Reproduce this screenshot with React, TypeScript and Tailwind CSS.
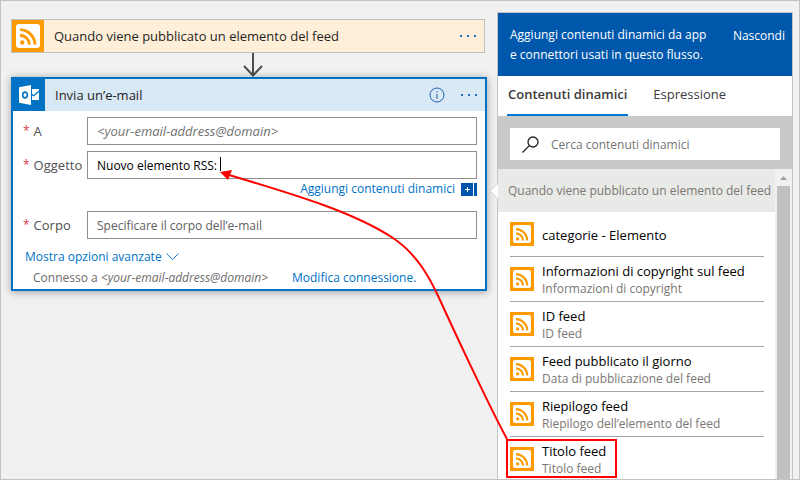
import { useState } from 'react';

const feedItems = [
  { title: 'categorie - Elemento' },
  { title: 'Informazioni di copyright sul feed', detail: 'Informazioni di copyright' },
  { title: 'ID feed', detail: 'ID feed' },
  { title: 'Feed pubblicato il giorno', detail: 'Data di pubblicazione del feed' },
  { title: 'Riepilogo feed', detail: 'Riepilogo dell’elemento del feed' },
  { title: 'Titolo feed', detail: 'Titolo feed' },
];

function RssIcon({ className }: { className: string }) {
  return (
    <svg viewBox="0 0 32 32" className={className} aria-hidden="true">
      <rect width="32" height="32" fill="#ff9b00" />
      <rect x="4" y="4" width="24" height="24" rx="3" fill="#fff" />
      <circle cx="10.200" cy="22.500" r="2.200" fill="#ff9b00" />
      <path d="M8 15.200a9.600 9.600 0 0 1 9.400 9.400M8 9.600a15.500 15.500 0 0 1 15 15" fill="none" stroke="#ff9b00" strokeWidth="2.900" />
    </svg>
  );
}

function OutlookIcon() {
  return (
    <svg viewBox="0 0 32 32" className="size-8 shrink-0 bg-[#0072c6]" aria-hidden="true">
      <path d="M6 8.200 18 6v20L6 23.800z" fill="#fff" />
      <ellipse cx="12" cy="16" rx="2.300" ry="2.900" fill="none" stroke="#0072c6" strokeWidth="1.600" />
      <path d="M19 10h7v1.500l-5.500 4.500-1.500-1.200zM19 16.500l1.500 1.100L26 13.300V21h-7z" fill="#fff" />
    </svg>
  );
}

function MoreButton() {
  return (
    <button type="button" aria-label="Altre opzioni" className="flex h-6 w-8 items-center justify-center">
      <svg viewBox="0 0 16 2" className="h-0.5 w-4" fill="#1a6fc0">
        <rect width="2" height="2" />
        <rect x="7" width="2" height="2" />
        <rect x="14" width="2" height="2" />
      </svg>
    </button>
  );
}

function FieldLabel({ htmlFor, text }: { htmlFor: string; text: string }) {
  return (
    <label htmlFor={htmlFor} className="flex h-7 gap-1 pl-2.5 text-[13px] leading-7 text-[#505050]">
      <span className="text-xs leading-7 text-[#e0384a]">*</span>
      {text}
    </label>
  );
}

const fieldClass = 'h-7 w-full border border-[#8f8f8f] bg-white px-[9px] outline-none';

export default function App() {
  const [subject, setSubject] = useState('Nuovo elemento RSS:');

  return (
    <div className="relative flex h-screen gap-2.5 overflow-hidden border border-[#c3c3c3] bg-[#f1f1f1] pr-1.5 pl-2.5 font-['Open_Sans','Noto_Sans',sans-serif] text-xs">
      <main className="flex min-w-0 flex-1 flex-col pt-[18px]">
        <section className="mr-0.5 flex items-center border border-[#c0c0c0] bg-[#ffefd9]">
          <RssIcon className="size-8 shrink-0" />
          <h2 className="flex-1 pt-0.5 pl-2.5 text-[13px] text-[#1f1f1f]">Quando viene pubblicato un elemento del feed</h2>
          <MoreButton />
        </section>

        <svg viewBox="0 0 20 24" className="ml-2 h-6 w-5 self-center" fill="none" stroke="#4d4d4d" strokeWidth="2" aria-hidden="true">
          <path d="M10 0v23M1 13l9 9.500L19 13" />
        </svg>

        <section className="border-2 border-[#0072c6] bg-white shadow-[0_1px_8px_rgba(0,0,0,0.35)]">
          <header className="flex items-center bg-[#d9e8f5]">
            <OutlookIcon />
            <h2 className="flex-1 pt-0.5 pl-2.5 text-[13px] text-[#1f1f1f]">Invia un’e-mail</h2>
            <button type="button" aria-label="Informazioni" className="mr-2">
              <svg viewBox="0 0 16 16" className="size-4" fill="none" stroke="#1a62b5" aria-hidden="true">
                <circle cx="8" cy="8" r="7" />
                <path d="M8 7v5M8 4.200v1.400" />
              </svg>
            </button>
            <MoreButton />
          </header>

          <form className="grid grid-cols-[74px_1fr] gap-y-1.5 pt-1.5 pr-2">
            <FieldLabel htmlFor="to" text="A" />
            <input
              id="to"
              placeholder="<your-email-address@domain>"
              className={fieldClass + ' text-[13px] italic placeholder:text-[#707070]'}
            />
            <FieldLabel htmlFor="subject" text="Oggetto" />
            <input
              id="subject"
              value={subject}
              onChange={(e) => setSubject(e.target.value)}
              className={fieldClass + ' text-black'}
            />
            <div className="col-span-2 -my-1.5 flex h-8 items-center justify-end gap-1.5 pb-3">
              <a href="#dinamici" className="text-[#0072c6]">Aggiungi contenuti dinamici</a>
              <svg viewBox="0 0 16 13" className="h-[13px] w-4" aria-hidden="true">
                <path d="M0 0h12v13H0zM13 0h3v13h-3z" fill="#0056ad" />
                <path d="M6.500 4v5M4 6.500h5" stroke="#fff" />
              </svg>
            </div>
            <FieldLabel htmlFor="body" text="Corpo" />
            <input
              id="body"
              placeholder="Specificare il corpo dell’e-mail"
              className={fieldClass + ' placeholder:text-[#606060]'}
            />
          </form>

          <div className="pt-[7px] pb-px leading-[21px]">
            <button type="button" className="flex items-center gap-1 pl-3 text-[#0072c6]">
              Mostra opzioni avanzate
              <svg viewBox="0 0 13 8" className="h-2 w-[13px]" fill="none" stroke="#1a7fd0" aria-hidden="true">
                <path d="M.5.5l6 6 6-6" />
              </svg>
            </button>
            <p className="flex gap-6 pl-5 text-[#6c6c6c]">
              <span>
                Connesso a <i>&lt;your-email-address@domain&gt;</i>
              </span>
              <a href="#connessione" className="text-[#0072c6]">Modifica connessione.</a>
            </p>
          </div>
        </section>
      </main>

      <aside className="relative mt-[11px] flex w-[296px] shrink-0 flex-col border border-b-0 border-[#c4c4c4] bg-white">
        <header className="flex h-[63px] shrink-0 items-start justify-between bg-[#0058ad] pt-3 pr-[7px] pl-3 leading-5 text-white">
          <p className="w-[200px]">Aggiungi contenuti dinamici da app e connettori usati in questo flusso.</p>
          <button type="button" className="leading-[22px]">Nascondi</button>
        </header>

        <nav className="flex h-10 shrink-0 gap-6 px-[9px] text-[13px] text-[#3b3b3b]" role="tablist">
          <button type="button" role="tab" aria-selected="true" className="border-b-2 border-[#0078d7] px-px font-semibold">
            Contenuti dinamici
          </button>
          <button type="button" role="tab" aria-selected="false" className="border-b-2 border-transparent px-px">
            Espressione
          </button>
        </nav>

        <div className="bg-[#c8cac7] px-3 pt-3 pb-[9px]">
          <label className="flex h-8 items-center gap-3 bg-white px-3">
            <svg viewBox="0 0 17 17" className="size-[17px] shrink-0" fill="none" stroke="#222" strokeWidth="1.300" aria-hidden="true">
              <circle cx="11" cy="6" r="5" />
              <path d="M7.300 9.600.5 16.500" />
            </svg>
            <input
              type="search"
              aria-label="Cerca"
              placeholder="Cerca contenuti dinamici"
              className="w-full pt-0.5 outline-none placeholder:text-[#757575]"
            />
          </label>
        </div>

        <div className="flex min-h-0 flex-1">
          <div className="min-w-0 flex-1 overflow-hidden">
            <h3 className="h-[43px] bg-[#e8eae7] pl-2.5 leading-[43px] whitespace-nowrap text-[#7b7672]">
              Quando viene pubblicato un elemento del feed
            </h3>
            <ul className="pr-[11px] pl-3">
              {feedItems.map((item) => (
                <li key={item.title} className="border-b border-[#a8a8a8]">
                  <button type="button" className="flex h-11 w-full items-center gap-2 text-left leading-[17px]">
                    <RssIcon className="size-6 shrink-0" />
                    <span className="flex flex-col pt-0.5">
                      <span className="text-[13px] leading-[17px] text-black">{item.title}</span>
                      {item.detail && <span className="text-[#7b7672]">{item.detail}</span>}
                    </span>
                  </button>
                </li>
              ))}
            </ul>
          </div>
          <div className="flex w-[17px] shrink-0 flex-col items-center bg-[#f1f1f1]" aria-hidden="true">
            <svg viewBox="0 0 17 17" className="size-[17px] shrink-0">
              <path d="M5 11l3.500-4 3.500 4z" fill="#a0a0a0" />
            </svg>
            <div className="w-[13px] flex-1 bg-[#c1c1c1]" />
          </div>
        </div>

        <svg viewBox="0 0 9 16" className="absolute top-[170px] -left-[9px] h-4 w-[9px]" aria-hidden="true">
          <path d="M9 0 1 8l8 8" fill="#fff" stroke="#cfcfcf" />
        </svg>
      </aside>

      <svg viewBox="0 0 800 480" className="pointer-events-none absolute -top-px -left-px h-[480px] w-[800px]" fill="none" stroke="#f00" strokeWidth="2" aria-hidden="true">
        <path d="M220.500 157v14" stroke="#000" strokeWidth="1" />
        <path d="M229 175C300 196 355 213 393 238C417 254 430 278 440 300C450 322 488 404 507 439" />
        <path d="M220 172l12-2-4 10z" fill="#f00" stroke="none" />
        <rect x="507" y="440" width="109" height="37" />
      </svg>
    </div>
  );
}
